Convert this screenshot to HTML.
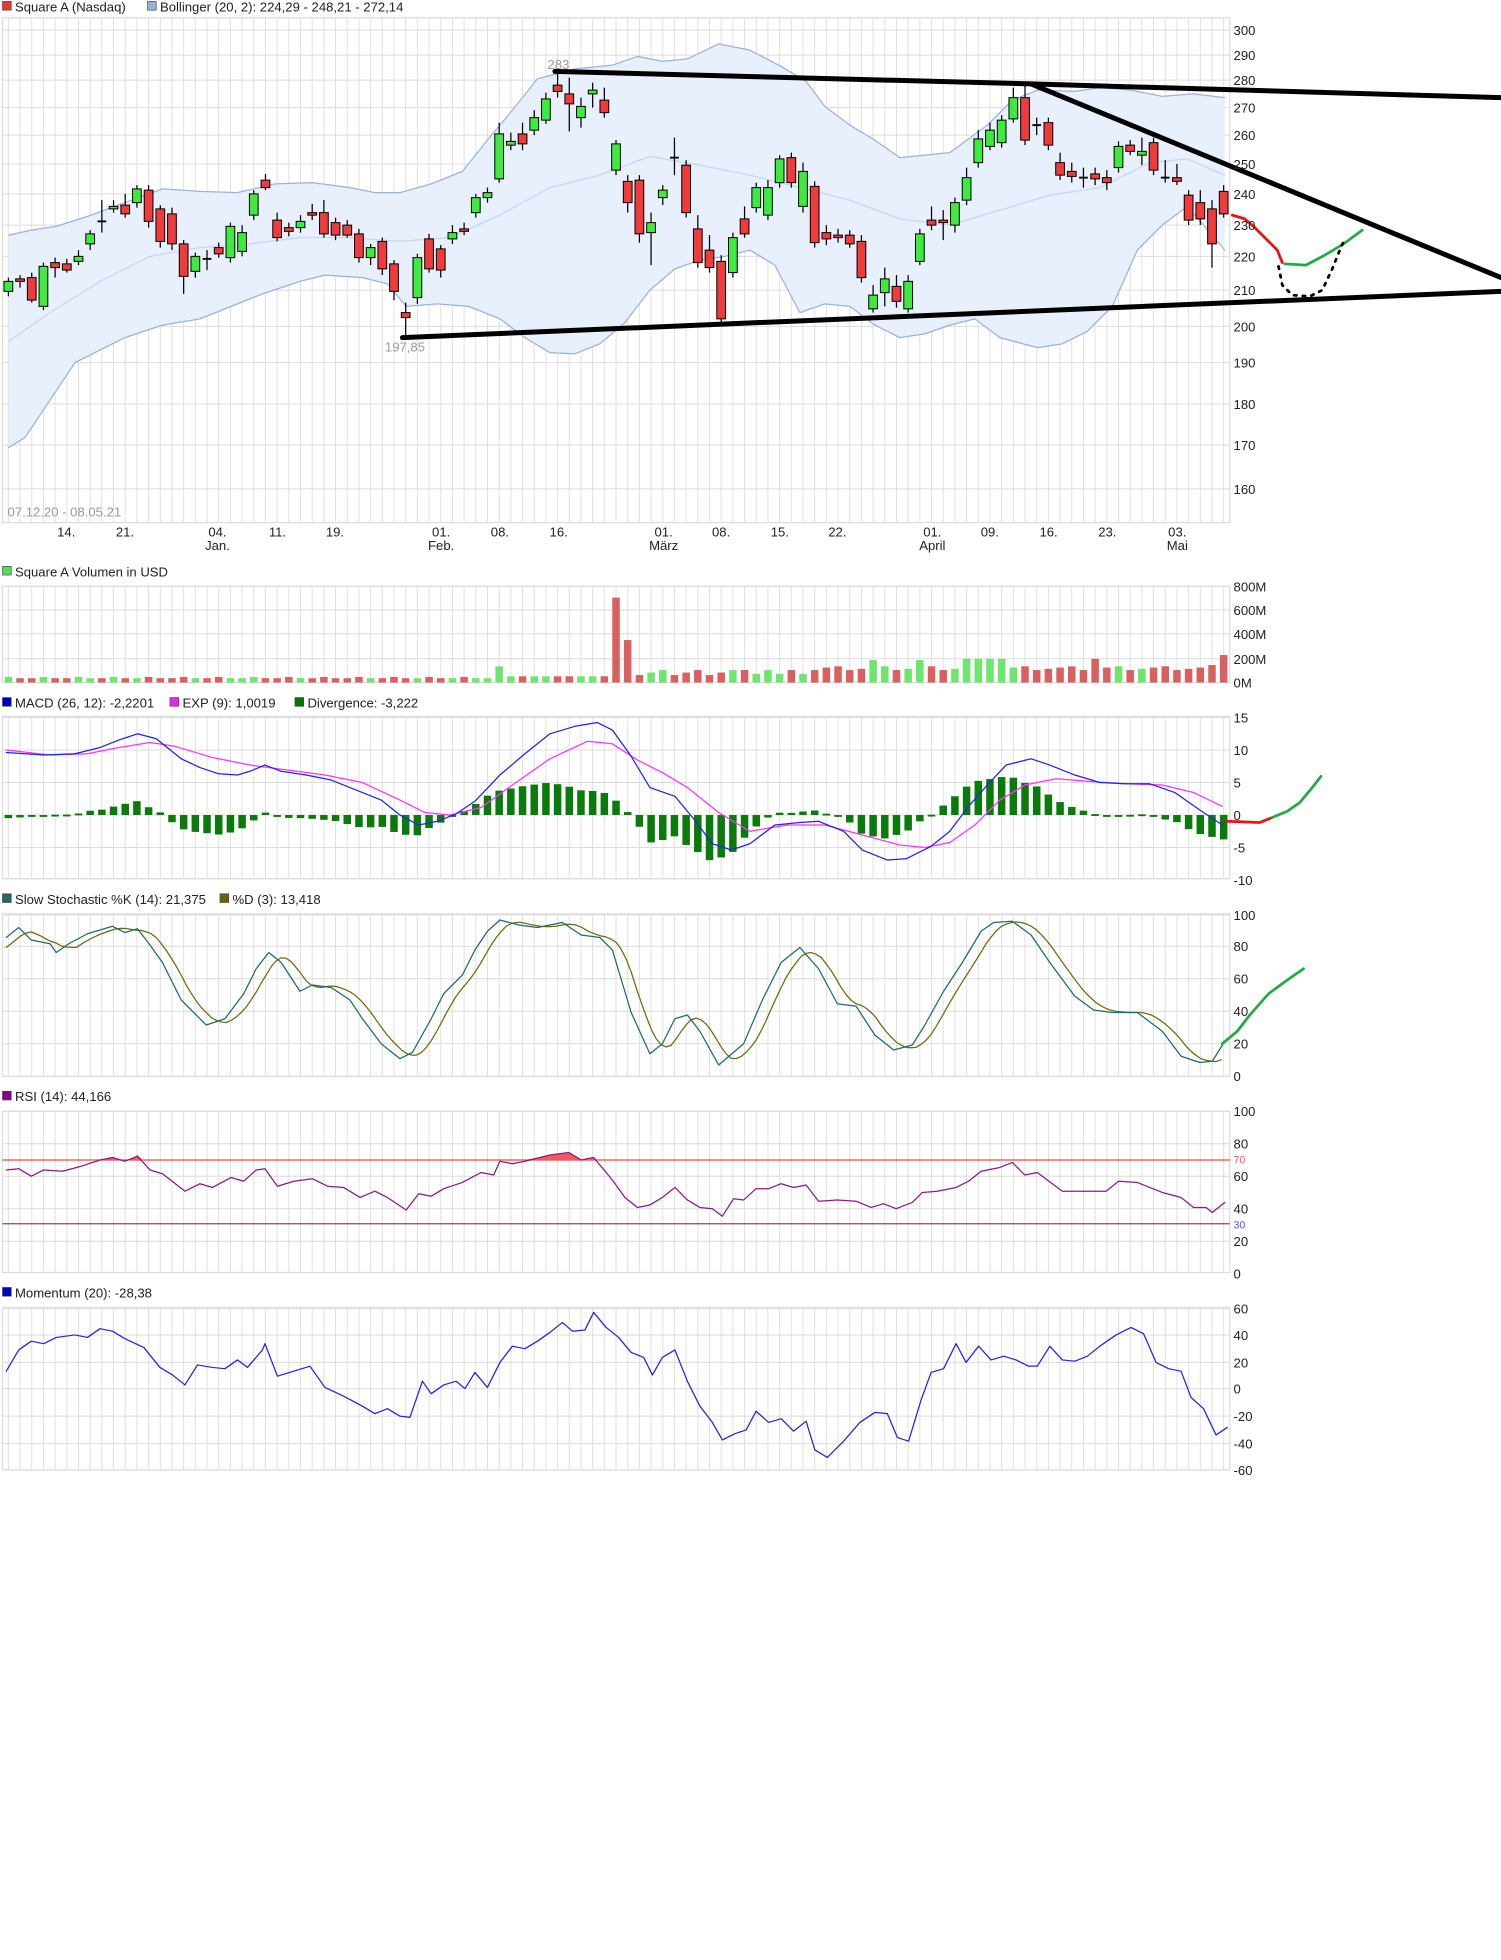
<!DOCTYPE html>
<html><head><meta charset="utf-8"><style>
html,body{margin:0;padding:0;background:#fff;width:1501px;height:1960px;overflow:hidden}
svg{display:block}
text{font-family:"Liberation Sans",Arial,sans-serif;font-size:10.5px;fill:#222}
.ax{font-size:10.5px;fill:#222}
.g{fill:#999}
</style></head><body>
<svg id="s" xmlns="http://www.w3.org/2000/svg" width="1501" height="1960" viewBox="0 0 1201 1568">
<g id="grid"></g>
<g id="gfx"></g>
<rect x="2" y="1" width="7" height="7" fill="#e33" stroke="#444" stroke-width="0.5"/><text x="12" y="9">Square A (Nasdaq)</text>
<rect x="118" y="1" width="7" height="7" fill="#9ab0dc" stroke="#444" stroke-width="0.5"/><text x="128" y="9">Bollinger (20, 2): 224,29 - 248,21 - 272,14</text>
<text x="438" y="55" class="g">283</text>
<text x="308" y="281" class="g">197,85</text>
<text x="6" y="413" class="g">07.12.20 - 08.05.21</text>
<g class="ax">
<text x="987" y="28">300</text><text x="987" y="48">290</text><text x="987" y="68">280</text><text x="987" y="90">270</text><text x="987" y="112">260</text><text x="987" y="135">250</text><text x="987" y="159">240</text><text x="987" y="184">230</text><text x="987" y="209">220</text><text x="987" y="236">210</text><text x="987" y="265">200</text><text x="987" y="294">190</text><text x="987" y="327">180</text><text x="987" y="360">170</text><text x="987" y="395">160</text>
</g>
<g class="ax" text-anchor="middle">
<text x="53" y="429">14.</text><text x="100" y="429">21.</text><text x="174" y="429">04.</text><text x="174" y="440">Jan.</text><text x="222" y="429">11.</text><text x="268" y="429">19.</text><text x="353" y="429">01.</text><text x="353" y="440">Feb.</text><text x="400" y="429">08.</text><text x="447" y="429">16.</text><text x="531" y="429">01.</text><text x="531" y="440">März</text><text x="577" y="429">08.</text><text x="624" y="429">15.</text><text x="670" y="429">22.</text><text x="746" y="429">01.</text><text x="746" y="440">April</text><text x="792" y="429">09.</text><text x="839" y="429">16.</text><text x="886" y="429">23.</text><text x="942" y="429">03.</text><text x="942" y="440">Mai</text>
</g>
<rect x="2" y="453" width="7" height="7" fill="#5d5" stroke="#444" stroke-width="0.5"/><text x="12" y="461">Square A Volumen in USD</text>
<g class="ax"><text x="987" y="473">800M</text><text x="987" y="492">600M</text><text x="987" y="511">400M</text><text x="987" y="531">200M</text><text x="987" y="550">0M</text></g>
<rect x="2" y="558" width="7" height="7" fill="#00c" stroke="#444" stroke-width="0.5"/><text x="12" y="566">MACD (26, 12): -2,2201</text>
<rect x="136" y="558" width="7" height="7" fill="#e2e" stroke="#444" stroke-width="0.5"/><text x="146" y="566">EXP (9): 1,0019</text>
<rect x="236" y="558" width="7" height="7" fill="#070" stroke="#444" stroke-width="0.5"/><text x="246" y="566">Divergence: -3,222</text>
<g class="ax"><text x="987" y="578">15</text><text x="987" y="604">10</text><text x="987" y="630">5</text><text x="987" y="656">0</text><text x="987" y="682">-5</text><text x="987" y="708">-10</text></g>
<rect x="2" y="715" width="7" height="7" fill="#266" stroke="#444" stroke-width="0.5"/><text x="12" y="723">Slow Stochastic %K (14): 21,375</text>
<rect x="176" y="715" width="7" height="7" fill="#660" stroke="#444" stroke-width="0.5"/><text x="186" y="723">%D (3): 13,418</text>
<g class="ax"><text x="987" y="736">100</text><text x="987" y="761">80</text><text x="987" y="787">60</text><text x="987" y="813">40</text><text x="987" y="839">20</text><text x="987" y="865">0</text></g>
<rect x="2" y="873" width="7" height="7" fill="#808" stroke="#444" stroke-width="0.5"/><text x="12" y="881">RSI (14): 44,166</text>
<g class="ax"><text x="987" y="893">100</text><text x="987" y="919">80</text><text x="987" y="945">60</text><text x="987" y="971">40</text><text x="987" y="997">20</text><text x="987" y="1023">0</text></g>
<text x="987" y="931" style="font-size:8.5px;fill:#f55">70</text><text x="987" y="983" style="font-size:8.5px;fill:#55f">30</text>
<rect x="2" y="1030" width="7" height="7" fill="#00c" stroke="#444" stroke-width="0.5"/><text x="12" y="1038">Momentum (20): -28,38</text>
<g class="ax"><text x="987" y="1051">60</text><text x="987" y="1072">40</text><text x="987" y="1094">20</text><text x="987" y="1115">0</text><text x="987" y="1137">-20</text><text x="987" y="1159">-40</text><text x="987" y="1180">-60</text></g>
</svg>
<script>
var NS="http://www.w3.org/2000/svg";
function el(p,t,a){var e=document.createElementNS(NS,t);for(var k in a)e.setAttribute(k,a[k]);p.appendChild(e);return e;}
var G=document.getElementById('grid'),F=document.getElementById('gfx');
var X0=6.7,DX=9.35,N=105;
function cx(i){return X0+i*DX;}
var panels=[[14,418,[24,44,64,86,108,131,155,180,205,232,261,290,323,356,391]],[469,546,[469,488,507,527,546]],[573,703,[574,600,626,652,678,703]],[731,861,[732,757,783,809,835,861]],[889,1018,[889,915,941,967,993,1018]],[1046,1176,[1047,1068,1090,1111,1133,1155,1176]]];
panels.forEach(function(p){
 el(G,'rect',{x:2,y:p[0],width:982,height:p[1]-p[0],fill:'#fff',stroke:'#ddd','stroke-width':1});
 for(var i=0;i<N;i++)el(G,'line',{x1:cx(i),x2:cx(i),y1:p[0],y2:p[1],stroke:'#e0e0e0','stroke-width':0.8});
 p[2].forEach(function(y){el(G,'line',{x1:2,x2:984,y1:y,y2:y,stroke:'#dcdcdc','stroke-width':0.8});});
});
function pts(a){return a.map(function(p){return p[0]+','+p[1]}).join(' ');}
function line(a,c,w,extra){var o={points:pts(a),fill:'none',stroke:c,'stroke-width':w||1,'stroke-linejoin':'round','stroke-linecap':'round'};for(var k in extra)o[k]=extra[k];return el(F,'polyline',o);}
var up=[[7,188],[25,184],[45,181],[70,173],[100,162],[130,151],[160,153],[190,154],[220,147],[250,146],[280,150],[300,154],[320,154],[345,147],[370,137],[390,112],[410,88],[430,63],[460,55],[490,52],[510,45],[530,49],[550,47],[575,35],[600,40],[625,53],[645,65],[660,85],[680,100],[700,112],[720,126],[740,124],[760,122],[790,100],[810,80],[830,72],[860,73],[880,70],[905,72],[930,77],[955,75],[980,78]];
var lo=[[7,358],[20,350],[40,320],[60,290],[80,280],[100,270],[130,260],[160,255],[190,243],[210,235],[240,225],[260,220],[290,222],[310,227],[325,245],[350,243],[375,245],[400,255],[420,270],[440,282],[460,283],[480,275],[500,258],[520,232],[540,215],[560,208],[580,205],[600,200],[620,212],[640,250],[660,243],[680,245],[700,260],[720,270],[740,267],[760,260],[780,255],[800,270],[830,278],[850,275],[870,265],[890,245],[910,200],[930,180],[950,165],[980,200]];
var mid=[[7,273],[40,250],[80,225],[120,205],[160,198],[200,195],[240,190],[280,190],[320,193],[360,190],[400,172],[440,150],[480,140],[520,125],[560,132],[600,140],[640,150],[680,160],[720,175],[760,180],[800,168],[840,156],[880,150],[920,130],[950,127],[980,140]];
el(F,'polygon',{points:pts(up.concat(lo.slice().reverse())),fill:'#e8effd'});
line(up,'#9db0e0',1);line(lo,'#9db0e0',1);line(mid,'#c6d6f6',1);
var C=[[225,233,'g',222,237],[223,225,'r',220,230],[222,240,'r',218,242],[213,245,'g',210,248],[210,214,'r',206,222],[211,216,'r',207,218],[205,209,'g',200,212],[187,195,'g',184,200],[177,179,'k',160,186],[165,167,'g',160,170],[164,171,'r',155,174],[151,162,'g',148,166],[152,177,'r',148,182],[167,193,'r',164,198],[171,195,'r',166,200],[195,221,'r',192,235],[205,217,'g',202,222],[207,208,'k',200,216],[198,203,'r',194,206],[181,206,'g',178,210],[186,201,'g',180,205],[155,172,'g',152,176],[144,150,'r',139,152],[176,190,'r',170,193],[182,185,'r',178,189],[177,182,'g',172,186],[170,172,'r',163,176],[170,187,'r',160,190],[178,188,'r',174,192],[180,188,'r',176,190],[187,206,'r',183,210],[198,206,'g',195,212],[193,215,'r',190,220],[211,233,'r',208,240],[250,254,'r',242,270],[206,238,'g',203,243],[191,215,'r',187,218],[199,216,'r',196,222],[186,191,'g',180,195],[183,185,'r',178,188],[158,170,'g',155,174],[154,158,'g',150,162],[107,143,'g',98,146],[113,116,'g',106,120],[107,115,'r',98,120],[94,104,'g',88,108],[79,96,'g',74,99],[68,73,'r',58,78],[75,83,'r',62,105],[85,94,'g',78,102],[72,75,'g',66,86],[80,90,'r',70,94],[115,136,'g',112,140],[145,162,'r',140,170],[144,187,'r',140,194],[178,186,'g',170,212],[152,158,'g',148,164],[126,127,'k',110,140],[132,170,'r',128,174],[183,210,'r',172,214],[200,214,'r',188,218],[209,255,'r',204,260],[190,218,'g',186,222],[175,187,'r',165,190],[150,166,'g',146,170],[150,172,'g',144,176],[127,146,'g',124,150],[126,146,'r',122,150],[137,165,'g',130,170],[149,194,'r',145,198],[186,191,'r',180,196],[188,190,'r',183,194],[188,195,'r',184,198],[193,222,'r',188,226],[236,247,'g',228,250],[223,234,'g',214,245],[229,241,'r',220,246],[225,247,'g',220,250],[187,209,'g',183,212],[176,180,'r',165,184],[176,178,'r',168,192],[162,180,'g',158,186],[142,160,'g',134,164],[111,130,'g',104,134],[104,117,'g',98,120],[96,114,'g',92,118],[78,95,'g',70,98],[78,112,'r',66,116],[100,101,'k',94,108],[98,116,'r',94,120],[130,140,'r',122,144],[137,141,'r',130,146],[142,144,'k',134,150],[139,143,'r',134,148],[142,146,'r',136,152],[117,134,'g',113,138],[116,121,'r',112,124],[121,124,'g',110,132],[114,136,'r',110,140],[142,143,'k',128,146],[142,145,'r',131,148],[156,176,'r',152,180],[162,175,'r',152,180],[167,195,'r',160,214],[153,171,'r',148,174]];
C.forEach(function(c,i){var x=cx(i);
 el(F,'line',{x1:x,x2:x,y1:c[3],y2:c[4],stroke:'#000','stroke-width':1});
 if(c[2]=='k')el(F,'line',{x1:x-3.5,x2:x+3.5,y1:c[0],y2:c[0],stroke:'#000','stroke-width':1.5});
 else el(F,'rect',{x:x-3.5,y:c[0],width:7,height:Math.max(1.5,c[1]-c[0]),fill:c[2]=='g'?'#3dea3d':'#ee3b3b',stroke:'#000','stroke-width':0.8});
});
line([[444,57],[825,67],[1201,78]],'#000',4);
line([[825,67],[1201,222]],'#000',4);
line([[322,270],[1201,233]],'#000',4);
line([[986,172],[996,175],[1004,182],[1014,192],[1022,200],[1026,210]],'#e11',2.2);
line([[1028,211],[1045,212],[1060,204],[1075,195],[1090,184]],'#2a4',2.2);
line([[1023,213],[1026,228],[1034,236],[1048,237],[1058,232],[1066,215],[1072,200],[1076,191]],'#000',2.2,{'stroke-dasharray':'2,5'});
C.forEach(function(c,i){var x=cx(i),h,col=(c[2]=='g'?'#6ee66e':'#d86060');
 if(i<42)h=3.5+(i%3==0?1:0);else if(i==42)h=13;else if(i<52)h=5;else if(i==52)h=68;else if(i==53)h=34;else if(i<63)h=6+(i%3)*2;else if(i<70)h=7+(i%2)*3;else h=10+(i%4);
 if(i==74||i==78)h=18;if(i>=82&&i<=85)h=19;if(i==93)h=19;if(i==104)h=22;if(i==103)h=14;
 if(i==52||i==53)col='#d86060';
 el(F,'rect',{x:x-3,y:546-h,width:6,height:h,fill:col});
});
var mac=[[5,602],[20,603],[35,604],[60,603],[80,598],[95,592],[110,587],[125,591],[145,607],[160,614],[175,619],[190,620],[200,617],[212,612],[225,617],[245,620],[265,624],[285,632],[305,640],[320,652],[335,660],[350,657],[365,651],[380,641],[400,620],[420,603],[440,587],[460,581],[478,578],[490,584],[505,605],[520,630],[540,637],[555,655],[570,675],[585,680],[600,675],[620,660],[640,658],[655,657],[675,665],[690,680],[710,688],[725,687],[745,677],[760,665],[775,645],[790,628],[805,612],[825,607],[840,612],[860,620],[880,626],[900,627],[920,627],[940,634],[960,648],[978,660]];
var exp=[[5,600],[40,604],[70,603],[95,598],[120,594],[140,597],[170,606],[200,612],[230,616],[260,620],[290,626],[320,640],[340,650],[360,652],[385,646],[410,628],[440,607],[470,593],[490,595],[510,608],[530,618],[550,630],[575,650],[600,665],[630,660],[660,660],[690,668],[720,676],[740,678],[760,674],[780,660],[800,640],[820,628],[845,623],[870,625],[900,627],[930,628],[955,634],[978,645]];
function interp(a,x){for(var i=1;i<a.length;i++){if(x<=a[i][0]){var t=(x-a[i-1][0])/(a[i][0]-a[i-1][0]);return a[i-1][1]+t*(a[i][1]-a[i-1][1]);}}return a[a.length-1][1];}
for(var i=0;i<N;i++){var x=cx(i),d=(interp(mac,x)-interp(exp,x))*1.3;var y0=652,y1=652+d;
 el(F,'rect',{x:x-3,y:Math.min(y0,y1),width:6,height:Math.max(1.5,Math.abs(d)),fill:'#0a7a0a'});}
line(exp,'#ff33ff',1);line(mac,'#2222ee',1);
line([[982,657],[1008,658],[1018,654]],'#e11',2.2);
line([[1018,654],[1030,649],[1040,642],[1050,630],[1057,621]],'#2a4',2.2);
var sk=[[5,750],[15,742],[25,752],[40,755],[45,762],[55,755],[70,747],[90,741],[100,746],[110,743],[120,756],[130,770],[145,800],[165,820],[180,815],[195,795],[205,775],[215,762],[225,770],[240,793],[250,788],[265,790],[280,800],[290,815],[305,835],[320,847],[330,842],[345,815],[355,795],[370,780],[380,760],[390,745],[400,736],[415,740],[430,742],[450,738],[465,748],[480,750],[490,760],[505,810],[520,843],[530,835],[540,815],[550,812],[560,825],[575,852],[595,835],[610,800],[625,770],[640,758],[655,775],[670,803],[685,805],[700,828],[715,840],[730,836],[740,820],[755,793],[770,770],[785,745],[795,738],[810,737],[825,748],[840,770],[860,797],[875,808],[890,810],[910,810],[930,825],[945,845],[960,850],[970,849],[980,833]];
var sd=[];for(var x=5;x<=980;x+=4){var v=(interp(sk,x-4)+interp(sk,x-10)+interp(sk,x-16))/3;sd.push([x,v]);}
line(sd,'#6b6b10',1);line(sk,'#1f6b6b',1);
line([[978,835],[990,825],[1000,812],[1015,795],[1030,784],[1043,775]],'#2a4',2.2);
el(F,'line',{x1:2,x2:984,y1:928,y2:928,stroke:'#f44','stroke-width':1});
el(F,'line',{x1:2,x2:984,y1:979,y2:979,stroke:'#848','stroke-width':1});
el(F,'polygon',{points:'78,928 90,926 100,929 104,928 110,924 114,928',fill:'#f05a5a'});
el(F,'polygon',{points:'420,928 440,924 455,922 465,928 470,928 475,926 478,928',fill:'#f05a5a'});
var rsi=[[5,936],[15,935],[25,941],[35,936],[50,937],[65,933],[80,928],[90,926],[100,929],[110,925],[120,936],[130,939],[148,953],[160,947],[170,950],[185,942],[195,945],[205,936],[212,935],[222,949],[235,945],[250,943],[262,949],[275,950],[288,958],[300,953],[310,958],[325,968],[335,955],[345,957],[355,951],[370,946],[385,938],[395,940],[400,929],[410,931],[420,929],[440,924],[455,922],[465,928],[475,926],[490,944],[500,958],[510,966],[520,964],[530,958],[540,950],[550,960],[560,966],[570,967],[578,973],[587,959],[595,960],[605,951],[615,951],[625,947],[635,950],[645,948],[655,961],[670,960],[685,961],[697,966],[707,963],[717,967],[730,962],[738,954],[750,953],[765,950],[775,945],[785,937],[800,934],[810,930],[820,940],[830,938],[850,953],[870,953],[885,953],[895,945],[910,946],[920,950],[930,954],[945,958],[955,966],[965,966],[970,970],[980,962]];
line(rsi,'#8a1a8a',1);
var mo=[[5,1097],[15,1080],[25,1073],[35,1075],[45,1070],[60,1068],[70,1070],[80,1063],[90,1065],[100,1071],[115,1078],[128,1094],[138,1100],[148,1108],[158,1092],[170,1094],[180,1095],[190,1088],[198,1094],[210,1080],[212,1075],[222,1101],[235,1097],[248,1093],[260,1110],[275,1117],[290,1125],[300,1131],[310,1127],[320,1133],[328,1134],[338,1105],[345,1115],[355,1108],[365,1105],[372,1111],[380,1098],[390,1110],[400,1090],[410,1077],[420,1079],[430,1073],[440,1066],[450,1058],[458,1065],[468,1064],[475,1050],[485,1062],[495,1070],[505,1082],[515,1086],[522,1100],[530,1086],[540,1080],[550,1105],[560,1125],[570,1138],[578,1152],[588,1147],[597,1144],[605,1129],[615,1138],[625,1135],[635,1145],[645,1137],[652,1160],[662,1166],[675,1153],[688,1138],[700,1130],[710,1131],[718,1150],[727,1153],[737,1120],[745,1098],[755,1095],[765,1075],[773,1090],[783,1077],[793,1088],[803,1085],[813,1088],[823,1093],[830,1093],[840,1077],[850,1088],[860,1089],[870,1085],[880,1077],[893,1068],[905,1062],[915,1067],[925,1090],[935,1095],[945,1097],[953,1118],[963,1127],[973,1148],[982,1142]];
line(mo,'#2222ee',1);
</script>
</body></html>
